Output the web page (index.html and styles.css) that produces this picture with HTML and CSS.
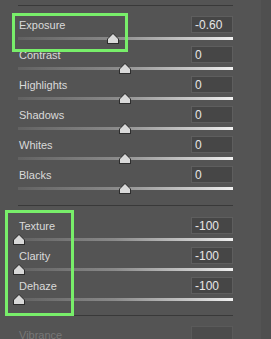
FILE: index.html
```html
<!DOCTYPE html>
<html lang="en">
<head>
    <meta charset="UTF-8">
    <meta name="viewport" content="width=device-width, initial-scale=1.0">
    <title>Basic Panel</title>
    <link rel="stylesheet" href="styles.css">
</head>
<body>
    <div class="panel">
        <div class="rule rule-top"></div>

        <div class="group tone">
            <div class="row">
                <div class="head"><span class="label">Exposure</span><span class="value">-0.60</span></div>
                <div class="track"><span class="thumb" style="left: 89px"></span></div>
            </div>
            <div class="row">
                <div class="head"><span class="label">Contrast</span><span class="value">0</span></div>
                <div class="track"><span class="thumb" style="left: 101px"></span></div>
            </div>
            <div class="row">
                <div class="head"><span class="label">Highlights</span><span class="value">0</span></div>
                <div class="track"><span class="thumb" style="left: 101px"></span></div>
            </div>
            <div class="row">
                <div class="head"><span class="label">Shadows</span><span class="value">0</span></div>
                <div class="track"><span class="thumb" style="left: 101px"></span></div>
            </div>
            <div class="row">
                <div class="head"><span class="label">Whites</span><span class="value">0</span></div>
                <div class="track"><span class="thumb" style="left: 101px"></span></div>
            </div>
            <div class="row">
                <div class="head"><span class="label">Blacks</span><span class="value">0</span></div>
                <div class="track"><span class="thumb" style="left: 101px"></span></div>
            </div>
        </div>

        <div class="rule rule-mid"></div>

        <div class="group presence">
            <div class="row">
                <div class="head"><span class="label">Texture</span><span class="value">-100</span></div>
                <div class="track"><span class="thumb" style="left: -5px"></span></div>
            </div>
            <div class="row">
                <div class="head"><span class="label">Clarity</span><span class="value">-100</span></div>
                <div class="track"><span class="thumb" style="left: -5px"></span></div>
            </div>
            <div class="row">
                <div class="head"><span class="label">Dehaze</span><span class="value">-100</span></div>
                <div class="track"><span class="thumb" style="left: -5px"></span></div>
            </div>
        </div>

        <div class="rule rule-low"></div>

        <div class="row dim">
            <div class="head"><span class="label">Vibrance</span><span class="value"></span></div>
        </div>
    </div>

    <div class="mark mark-exposure"></div>
    <div class="mark mark-presence"></div>
</body>
</html>
```

FILE: styles.css
```css
html {
    background-color: #4f4f4f;
}

body {
    margin: 0;
    padding: 0;
    position: relative;
    font-family: "Liberation Sans", Arial, sans-serif;
    font-size: 11px;
    color: #dadada;
}

.panel {
    width: 243px;
    height: 339px;
    padding-left: 18px;
    background-color: #545454;
    overflow: hidden;
}

.rule {
    width: 215px;
    height: 1px;
    background-color: #393939;
}

.rule-top {
    margin-top: 5px;
    margin-bottom: 10px;
}

.rule-mid {
    margin-top: 9px;
    margin-bottom: 11px;
}

.rule-low {
    margin-top: 8px;
    margin-bottom: 10px;
}

.row {
    width: 215px;
    height: 30px;
}

.head {
    display: flex;
    justify-content: space-between;
    align-items: center;
    height: 17px;
}

.label {
    padding-left: 1px;
}

.value {
    box-sizing: border-box;
    width: 42px;
    height: 17px;
    padding: 1px 0 0 3px;
    background-color: #464646;
    border: 1px solid #5e5e5e;
    color: #e6e6e6;
    font-size: 12px;
    line-height: 14px;
}

.track {
    position: relative;
    height: 3px;
    margin-top: 4px;
    background: linear-gradient(to right, #626262 0%, #8a8a8a 45%, #c8c8c8 80%, #f0f0f0 100%);
}

.thumb {
    position: absolute;
    top: -4px;
    width: 12px;
    height: 11px;
    background-color: #2c2c2c;
    clip-path: polygon(50% 0, 100% 55%, 100% 100%, 0 100%, 0 55%);
}

.thumb::after {
    content: "";
    position: absolute;
    left: 1px;
    top: 1px;
    width: 10px;
    height: 9px;
    background-color: #d9d9d9;
    clip-path: polygon(50% 0, 100% 55%, 100% 100%, 0 100%, 0 55%);
}

.dim .label {
    color: #777777;
}

.dim .value {
    background-color: #4c4c4c;
    border-color: #5a5a5a;
}

.mark {
    position: absolute;
    border: 3px solid #78ee6a;
    box-sizing: border-box;
}

.mark-exposure {
    left: 12px;
    top: 13px;
    width: 116px;
    height: 39px;
}

.mark-presence {
    left: 5px;
    top: 210px;
    width: 69px;
    height: 106px;
}
```
